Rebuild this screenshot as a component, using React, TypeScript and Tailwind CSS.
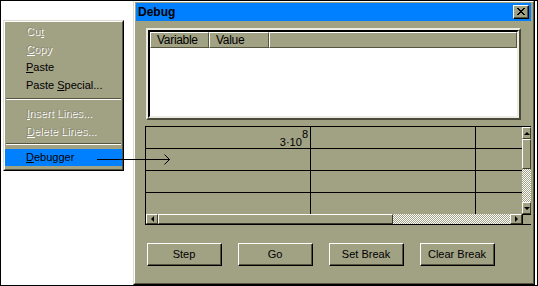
import React from "react";

const U = ({ c }: { c: string }) => <span className="underline underline-offset-1">{c}</span>;

const MenuItem = ({ children, disabled }: { children: React.ReactNode; disabled?: boolean }) => (
  <div
    className={
      disabled
        ? "h-[18px] flex items-center pl-[21px] text-[#8e8e76] [text-shadow:1px_1px_0_#ffffff] whitespace-pre"
        : "h-[18px] flex items-center pl-[21px] text-black whitespace-pre"
    }
  >
    <span>{children}</span>
  </div>
);

const Btn = ({ label }: { label: string }) => (
  <div className="w-[75px] h-[23px] border border-t-white border-l-white border-r-black border-b-black">
    <div className="h-full w-full border-r border-b border-r-[#55553f] border-b-[#55553f] flex items-center justify-center text-[11px]">
      {label}
    </div>
  </div>
);

const Dither = "[background-image:repeating-conic-gradient(#ffffff_0_25%,#a1a184_0_50%)] [background-size:2px_2px]";

export default function App() {
  return (
    <div className="relative w-[538px] h-[286px] bg-white border border-black overflow-hidden font-['Liberation_Sans',Arial,sans-serif] text-[11px] text-black">
      {/* Context menu */}
      <div className="absolute left-[2px] top-[19px] w-[121px] h-[151px] border border-t-[#dcdcd0] border-l-[#dcdcd0] border-r-black border-b-black bg-[#a1a184]">
        <div className="h-full w-full border border-t-white border-l-white border-r-[#55553f] border-b-[#55553f]">
          <MenuItem disabled>
            Cu<U c="t" />
          </MenuItem>
          <MenuItem disabled>
            <U c="C" />opy
          </MenuItem>
          <MenuItem>
            <U c="P" />aste
          </MenuItem>
          <MenuItem>
            {"Paste "}<U c="S" />pecial...
          </MenuItem>
          <div className="h-[10px] pt-[4px] px-[1px]">
            <div className="border-t border-t-[#55553f] border-b border-b-white" />
          </div>
          <MenuItem disabled>
            <U c="I" />nsert Lines...
          </MenuItem>
          <MenuItem disabled>
            <U c="D" />elete Lines...
          </MenuItem>
          <div className="h-[8px] pt-[3px] px-[1px]">
            <div className="border-t border-t-[#55553f] border-b border-b-white" />
          </div>
          <div className="mt-px h-[17px] bg-[#0080ff] flex items-center pl-[21px]">
            <span>
              <U c="D" />ebugger
            </span>
          </div>
        </div>
      </div>

      {/* Debug dialog */}
      <div className="absolute left-[132px] top-[-1px] w-[402px] h-[285px] border border-t-[#dcdcd0] border-l-[#dcdcd0] border-r-black border-b-black bg-[#a1a184]">
        <div className="h-full w-full border border-t-white border-l-white border-r-[#55553f] border-b-[#55553f] pt-px pl-px pr-[2px] flex flex-col">
          {/* Title bar */}
          <div className="h-[18px] bg-[#0080ff] flex items-center justify-between pl-[2px] pr-[2px]">
            <span className="font-bold text-[12px] leading-none">Debug</span>
            <div className="w-[16px] h-[14px] border border-t-white border-l-white border-r-black border-b-black bg-[#a1a184]">
              <div className="h-full w-full border-r border-b border-r-[#55553f] border-b-[#55553f] flex items-center justify-center">
                <svg width="8" height="7" viewBox="0 0 8 7" shapeRendering="crispEdges">
                  <path d="M0 0h2v1h-2zM6 0h2v1h-2zM1 1h2v1h-2zM5 1h2v1h-2zM2 2h4v1h-4zM3 3h2v1h-2zM2 4h4v1h-4zM1 5h2v1h-2zM5 5h2v1h-2zM0 6h2v1h-2zM6 6h2v1h-2z" fill="#000" />
                </svg>
              </div>
            </div>
          </div>

          {/* List view */}
          <div className="mt-[7px] ml-[10px] w-[375px] h-[92px] border-2 border-t-[#ecece2] border-l-[#ecece2] border-r-[#4a4a3a] border-b-[#4a4a3a]">
            <div className="h-full w-full border-2 border-t-black border-l-black border-r-[#ecece2] border-b-[#ecece2] bg-white flex flex-col">
              <div className="h-[16px] flex bg-[#a1a184] text-[12px] tracking-[-0.3px]">
                <div className="w-[59px] h-full border border-t-white border-l-white border-r-[#55553f] border-b-[#55553f] pl-[6px] flex items-center">
                  Variable
                </div>
                <div className="w-[60px] h-full border border-t-white border-l-white border-r-[#55553f] border-b-[#55553f] pl-[6px] flex items-center">
                  Value
                </div>
                <div className="flex-1 h-full border border-t-white border-l-white border-r-[#55553f] border-b-[#55553f]" />
              </div>
              <div className="flex-1 bg-white" />
            </div>
          </div>

          {/* Grid */}
          <div className="mt-[6px] ml-[9px] w-[386px] h-[99px] border-t border-l border-b border-black flex flex-col">
            <div className="h-[87px] flex">
              <div className="w-[376px] flex flex-col">
                {[0, 1, 2, 3].map((r) => (
                  <div key={r} className={r < 3 ? "h-[22px] flex border-b border-black" : "h-[21px] flex"}>
                    <div className="w-[165px] h-full border-r border-black flex items-end justify-end pr-[2px]">
                      {r === 0 ? (
                        <span className="leading-none text-[11px]">
                          3·10<span className="relative top-[-8px]">8</span>
                        </span>
                      ) : null}
                    </div>
                    <div className="w-[165px] h-full border-r border-black" />
                    <div className="flex-1 h-full" />
                  </div>
                ))}
              </div>
              {/* Vertical scrollbar */}
              <div className="w-[9px] h-full flex flex-col">
                <div className="h-[12px] border border-t-white border-l-white border-r-[#3c3c2c] border-b-[#3c3c2c] flex items-center justify-center">
                  <div className="w-0 h-0 border-x-[3px] border-x-transparent border-b-[3px] border-b-black" />
                </div>
                <div className="h-[30px] border border-t-white border-l-white border-r-[#3c3c2c] border-b-[#3c3c2c]" />
                <div className={"flex-1 " + Dither} />
                <div className="h-[12px] border border-t-white border-l-white border-r-[#3c3c2c] border-b-[#3c3c2c] flex items-center justify-center">
                  <div className="w-0 h-0 border-x-[3px] border-x-transparent border-t-[3px] border-t-black" />
                </div>
              </div>
            </div>
            {/* Horizontal scrollbar */}
            <div className="h-[10px] flex">
              <div className="w-[12px] h-full border border-t-white border-l-white border-r-[#3c3c2c] border-b-[#3c3c2c] flex items-center justify-center">
                <div className="w-0 h-0 border-y-[3px] border-y-transparent border-r-[3px] border-r-black" />
              </div>
              <div className="w-[235px] h-full border border-t-white border-l-white border-r-[#3c3c2c] border-b-[#3c3c2c]" />
              <div className={"w-[117px] h-full " + Dither} />
              <div className="w-[12px] h-full border border-t-white border-l-white border-r-[#3c3c2c] border-b-[#3c3c2c] flex items-center justify-center">
                <div className="w-0 h-0 border-y-[3px] border-y-transparent border-l-[3px] border-l-black" />
              </div>
              <div className="flex-1 h-full border-l border-t border-black" />
            </div>
          </div>

          {/* Buttons */}
          <div className="mt-[18px] ml-[11px] flex gap-[16px]">
            <Btn label="Step" />
            <Btn label="Go" />
            <Btn label="Set Break" />
            <Btn label="Clear Break" />
          </div>
        </div>
      </div>

      {/* Connector line */}
      <svg
        className="absolute left-[-1px] top-[-1px] pointer-events-none"
        width="538"
        height="286"
        viewBox="0 0 538 286"
        shapeRendering="crispEdges"
      >
        <path d="M97 159.5H170" stroke="#000" strokeWidth="1" fill="none" />
        <path d="M164.5 154.5L169.5 159.5L164.5 164.5" stroke="#000" strokeWidth="1" fill="none" shapeRendering="auto" />
      </svg>
    </div>
  );
}
